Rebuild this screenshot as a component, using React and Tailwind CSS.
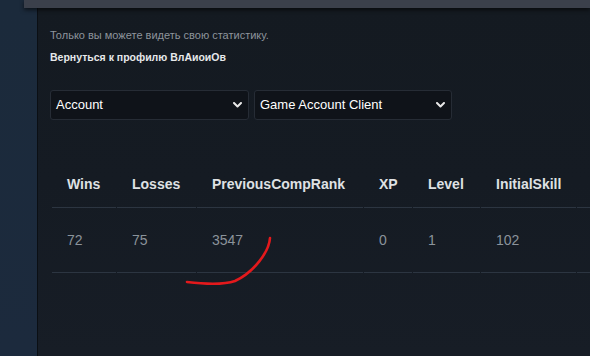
import React from 'react'

const headers = ['Wins', 'Losses', 'PreviousCompRank', 'XP', 'Level', 'InitialSkill', '']
const values = ['72', '75', '3547', '0', '1', '102', '']
const widths = ['w-[64px]', 'w-[79px]', 'w-[166px]', 'w-[48px]', 'w-[67px]', 'w-[95px]', 'w-[120px]']

function Chevron() {
  return (
    <svg width="9" height="6" viewBox="0 0 9 6" className="shrink-0">
      <path d="M1 1 L4.5 4.5 L8 1" fill="none" stroke="#e8e8e8" strokeWidth="2" strokeLinecap="round" strokeLinejoin="round" />
    </svg>
  )
}

function Select({ label, className }) {
  return (
    <div className={`${className} h-[30px] shrink-0 flex items-center justify-between pl-[5px] pr-[6px] bg-[#0f1319] border border-[#262c35] rounded-[3px] text-[13px] text-white`}>
      <span>{label}</span>
      <Chevron />
    </div>
  )
}

export default function App() {
  return (
    <div className="w-[590px] h-[356px] overflow-hidden flex flex-col bg-[#151b23] font-['Liberation_Sans',Arial,sans-serif]">
      <div className="flex h-[8px] shrink-0 relative z-10">
        <div className="w-[24px] bg-[#1b2a3b]"></div>
        <div className="flex-1 bg-[#3b404b] shadow-[0_2px_4px_rgba(0,0,0,0.6)]"></div>
      </div>

      <div className="flex flex-1 min-h-0">
        <div className="w-[38px] shrink-0 bg-gradient-to-b from-[#1b2a3b] to-[#1c2a3d] border-r border-[#0b0f14]"></div>

        <div className="flex-1 relative overflow-hidden bg-gradient-to-b from-[#141a21] via-[#151b23] to-[#171d26]">
          <div className="pl-[12px] pt-[21px]">
            <p className="text-[11px] leading-[13px] text-[#8d949c]">Только вы можете видеть свою статистику.</p>
            <p className="mt-[9px] text-[10.5px] leading-[13px] font-bold text-[#e6e8ea]">Вернуться к профилю ВлАиоиОв</p>

            <div className="mt-[26px] flex gap-[5px]">
              <Select label="Account" className="w-[199px]" />
              <Select label="Game Account Client" className="w-[198px]" />
            </div>
          </div>

          <div className="mt-[41px] ml-[14px]">
            <table className="table-fixed w-[647px] border-separate border-spacing-x-[1px] border-spacing-y-0 -ml-[1px] whitespace-nowrap text-[14px]">
              <thead>
                <tr>
                  {headers.map((h, i) => (
                    <th key={i} className={`${widths[i]} h-[47px] pl-[15px] text-left font-bold text-[#dfe1e3] border-b border-[#2c3541] align-middle`}>
                      {h}
                    </th>
                  ))}
                </tr>
              </thead>
              <tbody>
                <tr>
                  {values.map((v, i) => (
                    <td key={i} className={`${widths[i]} h-[65px] pl-[15px] text-left text-[#8b939b] border-b border-[#2c3541] align-middle`}>
                      {v}
                    </td>
                  ))}
                </tr>
              </tbody>
            </table>
          </div>

          <svg className="absolute left-0 top-0 pointer-events-none" width="552" height="348" viewBox="39 8 552 348">
            <path d="M271 238 C270 252 255 272 236 281 C224 285 205 284 188 282" fill="none" stroke="#e3191c" strokeWidth="2.6" strokeLinecap="round" />
          </svg>
        </div>
      </div>
    </div>
  )
}
